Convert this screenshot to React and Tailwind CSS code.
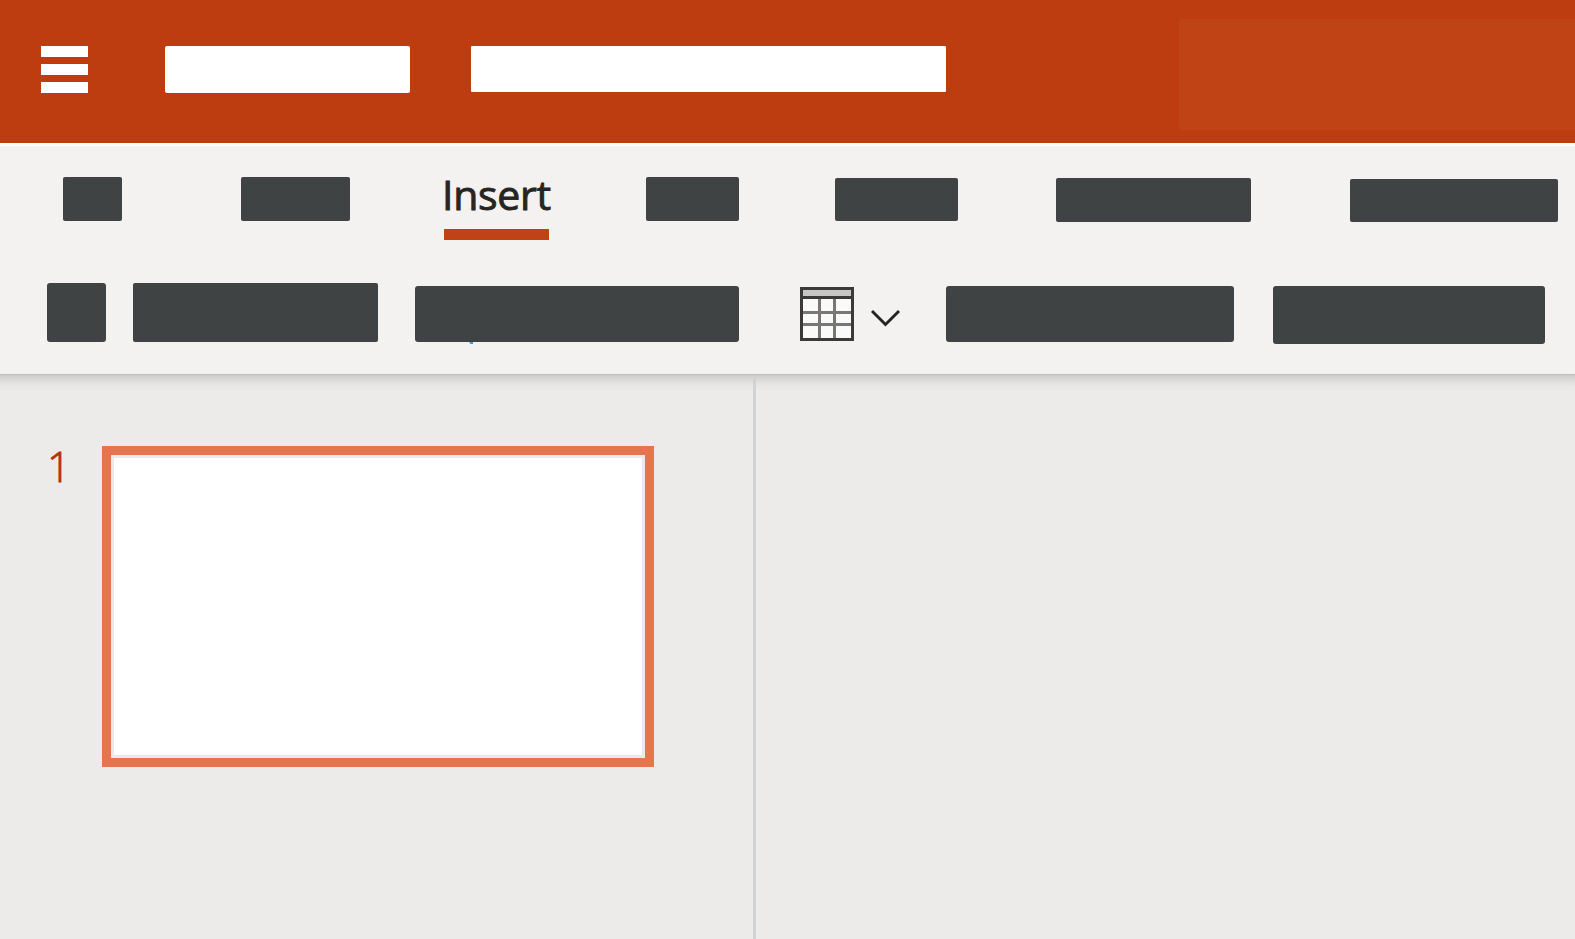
function Block({ className }) {
  return <div className={`shrink-0 bg-[#3f4344] ${className}`} />;
}

function TitleBar() {
  return (
    <header className="flex h-[146px] items-start overflow-hidden border-b-[3px] border-white bg-[#bd3d11]">
      <div className="mt-[46px] ml-[41px] flex w-[47px] shrink-0 flex-col gap-[7px]">
        <div className="h-[11px] bg-white" />
        <div className="h-[11px] bg-white" />
        <div className="h-[11px] bg-white" />
      </div>
      <div className="mt-[46px] ml-[77px] h-[47px] w-[245px] shrink-0 rounded-[2px] bg-white" />
      <div className="mt-[46px] ml-[61px] h-[46px] w-[475px] shrink-0 rounded-[1px] bg-white" />
      <div className="mt-[19px] ml-[233px] h-[111px] flex-1 rounded-l-[3px] bg-[#c04316]" />
    </header>
  );
}

function Tabs() {
  return (
    <nav className="flex h-[137px] items-start pt-[31px]">
      <Block className="ml-[63px] h-[44px] w-[59px] rounded-[2px]" />
      <Block className="ml-[119px] h-[44px] w-[109px] rounded-[2px]" />
      <div className="-mt-[12px] ml-[94px] flex w-[105px] shrink-0 flex-col">
        <span className="-ml-[2px] h-[64px] pt-[1px] text-[41px] leading-[56px] tracking-[-0.3px] whitespace-nowrap text-[#262522] [-webkit-text-stroke:0.9px_#262522]">Insert</span>
        <div className="h-[11px] bg-[#c04316]" />
      </div>
      <Block className="ml-[97px] h-[44px] w-[93px] rounded-[2px]" />
      <Block className="mt-px ml-[96px] h-[43px] w-[123px] rounded-[2px]" />
      <Block className="mt-px ml-[98px] h-[44px] w-[195px] rounded-[2px]" />
      <Block className="mt-[2px] ml-[99px] h-[43px] w-[208px] rounded-[2px]" />
    </nav>
  );
}

function TableIcon() {
  return (
    <svg className="mt-[4px] ml-[61px] h-[54px] w-[54px] shrink-0" viewBox="0 0 54 54" shapeRendering="crispEdges">
      <rect width="54" height="54" fill="#3b3a38" />
      <rect x="3" y="3" width="48" height="6" fill="#c8c6c4" />
      <rect x="3" y="12" width="48" height="39" fill="#fafafa" />
      <path d="M18 12h3v39h-3zM33 12h3v39h-3zM3 24h48v3H3zM3 36h48v3H3z" fill="#797774" />
    </svg>
  );
}

function Toolbar() {
  return (
    <div className="flex items-start">
      <Block className="ml-[47px] h-[59px] w-[59px] rounded-[3px]" />
      <Block className="ml-[27px] h-[59px] w-[245px] rounded-[2px]" />
      <div className="mt-[3px] ml-[37px] shrink-0">
        <Block className="h-[56px] w-[324px] rounded-[3px]" />
        <svg className="ml-[54px] h-[2px] w-[4px]" viewBox="0 0 4 2">
          <path d="M0 0h4v2H1.5z" fill="#3a96dd" />
        </svg>
      </div>
      <TableIcon />
      <svg className="mt-[23px] ml-[16px] h-[24px] w-[32px] shrink-0" viewBox="0 0 32 24" fill="none">
        <path d="M2 5 15.5 18.5 29 5" stroke="#252423" strokeWidth="2.9" />
      </svg>
      <Block className="mt-[3px] ml-[44px] h-[56px] w-[288px] rounded-[3px]" />
      <Block className="mt-[3px] ml-[39px] h-[58px] w-[272px] rounded-[3px]" />
    </div>
  );
}

export default function App() {
  return (
    <div className="flex h-[939px] w-[1575px] flex-col overflow-hidden bg-[#ecebe9] font-['Open_Sans',sans-serif]">
      <TitleBar />
      <section className="h-[228px] shrink-0 bg-[#f3f2f0]">
        <Tabs />
        <Toolbar />
      </section>
      <main className="flex flex-1 border-t border-[#bebdbb] bg-[linear-gradient(to_bottom,#cdccca_0px,#d9d8d6_4px,#e3e2e0_8px,#e9e8e6_12px,#ecebe9_17px)]">
        <aside className="mt-[2px] flex w-[756px] items-start border-r-[3px] border-[#d1d2d3] pt-[69px]">
          <span className="-mt-px ml-[47px] w-[55px] shrink-0 text-[42px] leading-[42px] font-light text-[#b7310e] [-webkit-text-stroke:0.8px_#b7310e]">1</span>
          <div className="h-[321px] w-[552px] border-[9px] border-[#e8734f] bg-white">
            <div className="h-full border-[3px] border-[#ebeae8]" />
          </div>
        </aside>
        <div className="flex-1" />
      </main>
    </div>
  );
}
